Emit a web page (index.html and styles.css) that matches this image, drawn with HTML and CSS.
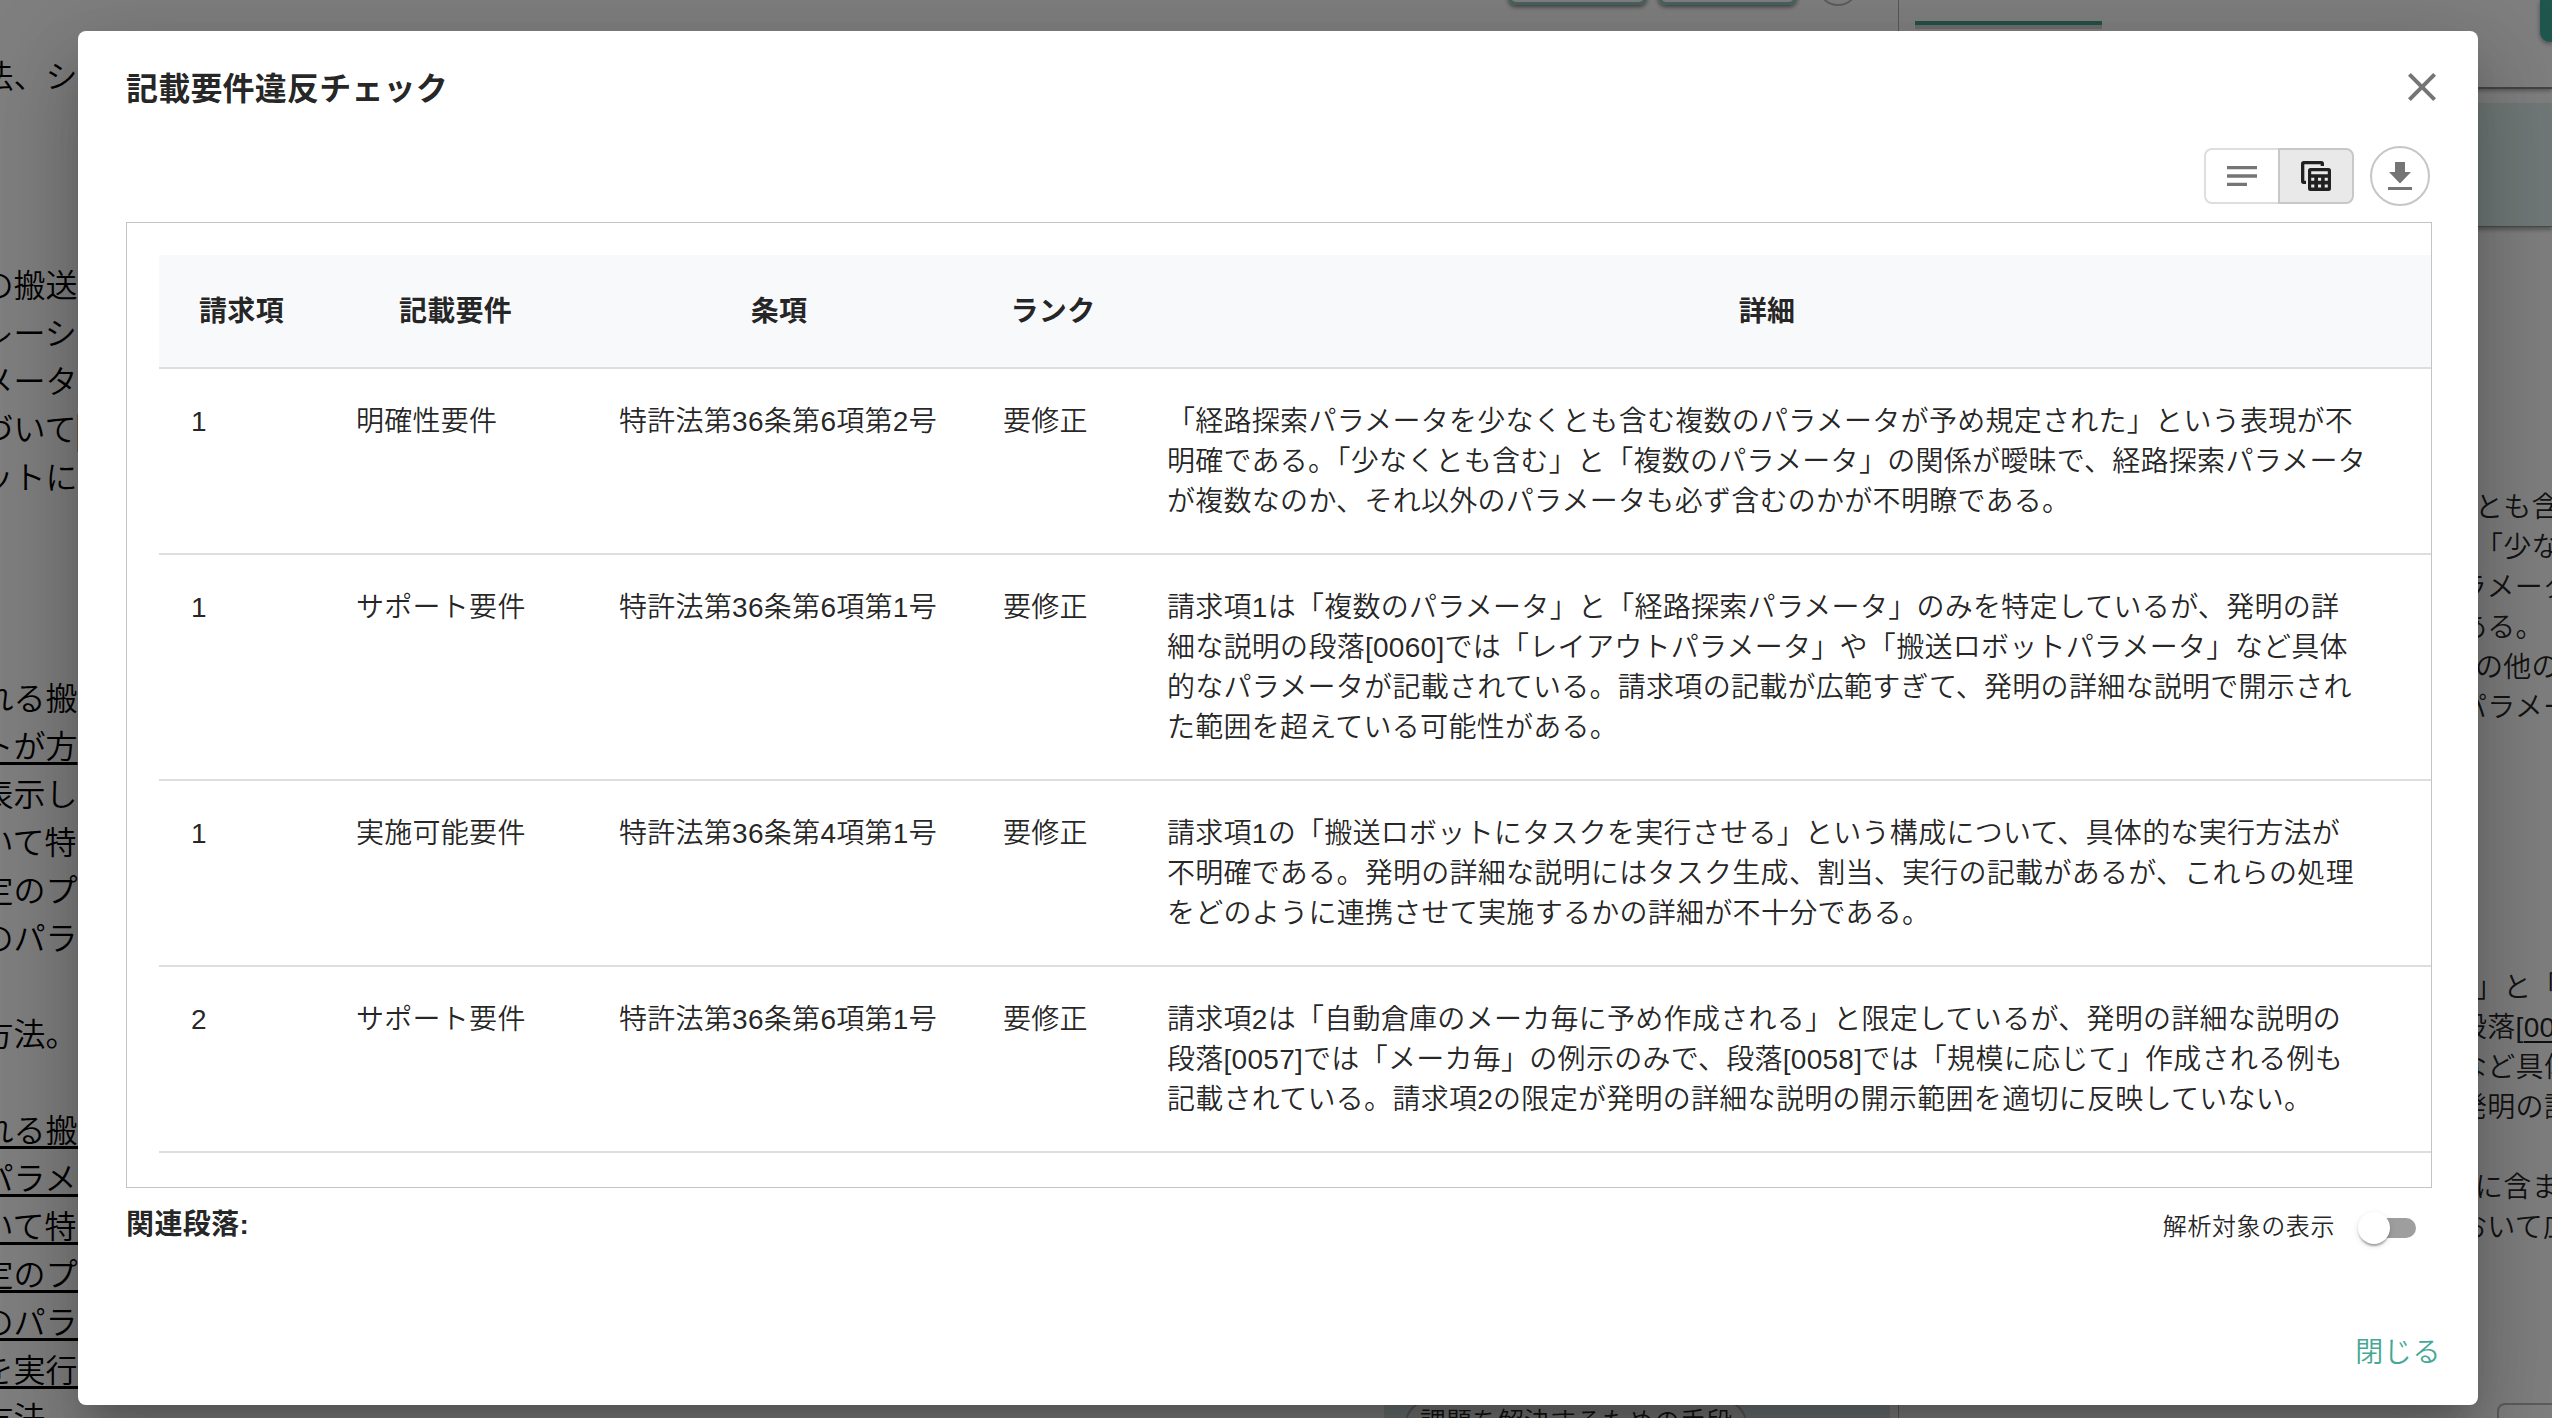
FILE: index.html
```html
<!DOCTYPE html>
<html lang="ja">
<head>
<meta charset="utf-8">
<title>記載要件違反チェック</title>
<link rel="stylesheet" href="styles.css">
</head>
<body>
<div class="app">
  <section class="doc">
    <p class="doc-title">法、シ</p>
    <p class="doc-claim">の搬送<br>レーシ<br>メータ<br>づいて<mark></mark><br>ットに</p>
    <p class="doc-desc">れる搬<br><u>トが方</u><br>表示し<br>いて特<br>定のプ<br>のパラ<br><br>方法。<br><br><u>れる搬送</u><br><u>パラメー</u><br><u>いて特定</u><br><u>定のプロ</u><br><u>のパラメ</u><br><u>を実行す</u><br>方法。</p>
  </section>
  <section class="center">
    <div class="center-actions"><span class="btn"></span><span class="btn"></span><span class="round"></span></div>
    <div class="center-band"><span class="chip">課題を解決するための手段</span></div>
  </section>
  <aside class="side">
    <div class="side-head"><span class="tab"></span><span class="primary"></span></div>
    <div class="side-card"></div>
    <div class="side-text first">
      <p>とも含む</p><p>「少なく</p><p class="half">ラメータ</p><p class="half">ある。</p><p>の他の</p><p class="half">パラメー</p>
    </div>
    <div class="side-text second">
      <p>」と「経</p><p class="half">段落[<u>0060</u>]</p><p class="half">など具体</p><p class="half">発明の詳</p><p>&nbsp;</p><p>に含まれ</p><p class="half">おいて広</p>
    </div>
    <div class="side-box"></div>
  </aside>
</div>
<div class="overlay">
  <div class="dialog" role="dialog">
    <header class="dialog-head">
      <h1>記載要件違反チェック</h1>
      <svg class="close" viewBox="0 0 24 24"><path d="M19 6.41 17.59 5 12 10.59 6.41 5 5 6.41 10.59 12 5 17.59 6.41 19 12 13.41 17.59 19 19 17.59 13.41 12z"/></svg>
    </header>
    <div class="toolbar">
      <div class="toggle">
        <button class="seg"><svg class="ic-notes" viewBox="0 0 24 24"><path d="M3 18h12v-2H3zM3 6v2h18V6zm0 7h18v-2H3z"/></svg></button>
        <button class="seg on"><svg class="ic-table" viewBox="0 0 30 30"><path fill="none" stroke="currentColor" stroke-width="3.33" d="M21.33 4.9V2.67a1 1 0 0 0-1-1H2.67a1 1 0 0 0-1 1v17.66a1 1 0 0 0 1 1H5"/><path fill="currentColor" fill-rule="evenodd" d="M9.5 7h18a2.5 2.5 0 0 1 2.5 2.5v18a2.5 2.5 0 0 1-2.5 2.5h-18A2.5 2.5 0 0 1 7 27.500v-18A2.5 2.5 0 0 1 9.500 7zM10.200 10.300v3h16.600v-3zM10.200 16.700v3.100h3.100v-3.100zM17 16.700v3.100h3.100v-3.100zM23.700 16.700v3.100h3.100v-3.100zM10.200 23.500v3.100h3.100v-3.100zM17 23.500v3.100h3.100v-3.100zM23.700 23.500v3.100h3.100v-3.100z"/></svg></button>
      </div>
      <button class="download"><svg viewBox="0 0 24 28"><path d="M7 0h10v10h6L12 21.500 1 10h6zM0 25h24v3H0z"/></svg></button>
    </div>
    <div class="table-box">
      <table>
        <colgroup><col class="c1"><col class="c2"><col class="c3"><col class="c4"><col class="c5"></colgroup>
        <thead><tr><th>請求項</th><th>記載要件</th><th>条項</th><th>ランク</th><th>詳細</th></tr></thead>
        <tbody>
          <tr><td>1</td><td>明確性要件</td><td>特許法第36条第6項第2号</td><td>要修正</td><td>「経路探索パラメータを少なくとも含む複数のパラメータが予め規定された」という表現が不<br>明確である。「少なくとも含む」と「複数のパラメータ」の関係が曖昧で、経路探索パラメータ<br>が複数なのか、それ以外のパラメータも必ず含むのかが不明瞭である。</td></tr>
          <tr><td>1</td><td>サポート要件</td><td>特許法第36条第6項第1号</td><td>要修正</td><td>請求項1は「複数のパラメータ」と「経路探索パラメータ」のみを特定しているが、発明の詳<br>細な説明の段落[0060]では「レイアウトパラメータ」や「搬送ロボットパラメータ」など具体<br>的なパラメータが記載されている。請求項の記載が広範すぎて、発明の詳細な説明で開示され<br>た範囲を超えている可能性がある。</td></tr>
          <tr><td>1</td><td>実施可能要件</td><td>特許法第36条第4項第1号</td><td>要修正</td><td>請求項1の「搬送ロボットにタスクを実行させる」という構成について、具体的な実行方法が<br>不明確である。発明の詳細な説明にはタスク生成、割当、実行の記載があるが、これらの処理<br>をどのように連携させて実施するかの詳細が不十分である。</td></tr>
          <tr><td>2</td><td>サポート要件</td><td>特許法第36条第6項第1号</td><td>要修正</td><td>請求項2は「自動倉庫のメーカ毎に予め作成される」と限定しているが、発明の詳細な説明の<br>段落[0057]では「メーカ毎」の例示のみで、段落[0058]では「規模に応じて」作成される例も<br>記載されている。請求項2の限定が発明の詳細な説明の開示範囲を適切に反映していない。</td></tr>
        </tbody>
      </table>
    </div>
    <div class="related">
      <h2>関連段落:</h2>
      <div class="switch-row"><span class="switch-label">解析対象の表示</span><span class="switch"></span></div>
    </div>
    <footer class="dialog-foot"><button class="close-btn">閉じる</button></footer>
  </div>
</div>
</body>
</html>
```

FILE: styles.css
```css
* { box-sizing: border-box; margin: 0; padding: 0; }
body {
  width: 2552px; height: 1418px; overflow: hidden; background: #fff;
  font-family: "Liberation Sans", "Noto Sans CJK JP", sans-serif;
  font-weight: 350;
  color: rgba(0, 0, 0, .87);
}
button { font: inherit; color: inherit; background: none; border: 0; }

/* page behind the dialog */
.app { display: grid; grid-template-columns: 1384px 514px 654px; height: 1418px; overflow: hidden; }
.doc { padding-top: 53px; margin-left: -18.5px; overflow: hidden; font-size: 32px; line-height: 48px; white-space: nowrap; color: #000; }
.doc-claim { margin-top: 161px; }
.doc-claim mark { display: inline-block; width: 30px; height: 38px; vertical-align: middle; background: #ffb38a; }
.doc-desc { margin-top: 173px; }
.doc u { text-decoration-thickness: 3px; text-underline-offset: 4px; }

.center { display: flex; flex-direction: column; justify-content: space-between; overflow: hidden; }
.center-actions { display: flex; align-items: flex-end; gap: 11px; height: 8px; padding-left: 124px; }
.btn { width: 139px; height: 60px; margin-bottom: 3px; border: 3px solid #8fc4bb; border-radius: 8px; box-shadow: 0 2px 4px rgba(0, 0, 0, .5); }
.round { width: 42px; height: 42px; margin: 0 0 2px 9px; border: 2px solid #bbb; border-radius: 50%; }
.center-band { width: 506px; height: 20px; padding: 2px 0 0 21px; background: #d9e6e6; }
.chip { display: inline-block; width: 342px; height: 48px; border: 2px solid #b4b4b4; border-radius: 24px; background: #ececec; font-size: 26px; line-height: 40px; padding-left: 13px; white-space: nowrap; }

.side { display: flex; flex-direction: column; border-left: 1px solid #b0b0b0; overflow: hidden; }
.side-head { display: flex; justify-content: space-between; flex: none; height: 89px; padding-left: 16px; border-bottom: 2px solid #888; box-shadow: 0 2px 4px rgba(0, 0, 0, .3); }
.tab { width: 187px; height: 25px; border-bottom: 4px solid #46a090; box-shadow: 0 4px 0 #d8d8d8; }
.primary { width: 12px; height: 42px; border-radius: 0 0 0 10px; background: #3eaf9f; box-shadow: 0 2px 5px rgba(0, 0, 0, .4); }
.side-card { flex: none; height: 124px; margin-top: 14px; background: #e0f2ef; border-bottom: 1px solid #8a9a98; box-shadow: 0 3px 4px rgba(0, 0, 0, .3); }
.side-text { flex: none; padding-left: 576px; font-size: 28px; line-height: 40px; letter-spacing: .3px; white-space: nowrap; }
.side-text .half { margin-left: -16px; }
.side-text.first { margin-top: 261px; }
.side-text.second { margin-top: 240px; }
.side-text u { text-decoration-thickness: 2px; text-underline-offset: 4px; }
.side-box { flex: none; width: 200px; height: 60px; margin: 155px 0 0 598px; border: 2px solid #b8b8b8; border-radius: 8px; }

/* dialog */
.overlay { position: absolute; inset: 0; padding: 31px 74px 13px 78px; background: rgba(0, 0, 0, .5); }
.dialog {
  display: flex; flex-direction: column; height: 1374px; padding: 0 46px 0 48px;
  background: #fff; border-radius: 8px;
  box-shadow: 0 22px 30px -14px rgba(0, 0, 0, .2), 0 48px 76px 6px rgba(0, 0, 0, .14), 0 18px 92px 16px rgba(0, 0, 0, .12);
}
.dialog-head { display: flex; justify-content: space-between; align-items: center; flex: none; height: 112px; }
.dialog-head h1 { padding-top: 3px; font-size: 32px; line-height: 48px; font-weight: 700; letter-spacing: .2px; }
.dialog-head .close { width: 48px; height: 48px; margin-right: -14px; fill: #757575; }
.toolbar { display: flex; justify-content: flex-end; align-items: center; flex: none; gap: 16px; height: 60px; margin: 3px 2px 0 0; }
.toggle { display: flex; height: 56px; }
.seg { display: flex; align-items: center; justify-content: center; width: 74px; border: 2px solid #dedede; border-right: 0; border-radius: 8px 0 0 8px; }
.seg.on { width: 76px; border: 2px solid #c8c8c8; border-radius: 0 8px 8px 0; background: #e9e9e9; color: #212121; }
.ic-notes { width: 40px; height: 40px; fill: #757575; }
.ic-table { width: 30px; height: 30px; }
.download { display: flex; align-items: center; justify-content: center; width: 60px; height: 60px; border: 2px solid #c6c6c6; border-radius: 50%; }
.download svg { width: 24px; height: 28px; fill: #757575; margin-top: -1px; }

.table-box { flex: none; height: 966px; margin-top: 16px; padding: 32px 0 0 32px; border: 1px solid #c4c4c4; overflow: hidden; }
table { width: 2272px; table-layout: fixed; border-collapse: separate; border-spacing: 0; font-size: 28px; line-height: 40px; letter-spacing: .28px; }
.c1 { width: 165px; } .c2 { width: 263px; } .c3 { width: 384px; } .c4 { width: 164px; } .c5 { width: 1296px; }
th { height: 114px; padding-top: 2px; background: #f8f9fb; border-bottom: 2px solid #dedede; font-weight: 700; text-align: center; }
th:last-child { padding-right: 32px; }
td { padding: 33px 0 31px 32px; border-bottom: 2px solid #dedede; vertical-align: top; white-space: nowrap; }

.related { display: flex; justify-content: space-between; flex: none; height: 80px; }
.related h2 { font-size: 28px; line-height: 40px; margin-top: 17px; letter-spacing: .4px; }
.switch-row { display: flex; align-items: center; gap: 29px; height: 80px; padding-right: 16px; font-size: 24px; letter-spacing: .6px; }
.switch-label { padding-bottom: 7px; }
.switch { display: block; width: 52px; height: 20px; border-radius: 10px; background: #9e9e9e; }
.switch::before { content: ""; display: block; width: 32px; height: 32px; margin: -6px 0 0 -6px; border-radius: 50%; background: #fff; box-shadow: 0 4px 2px -2px rgba(0, 0, 0, .2), 0 2px 2px rgba(0, 0, 0, .14), 0 2px 6px rgba(0, 0, 0, .12); }
.dialog-foot { display: flex; justify-content: flex-end; margin: 65px -9px 0 0; }
.close-btn { height: 40px; font-size: 28px; line-height: 40px; letter-spacing: .6px; color: #45a796; }
```
